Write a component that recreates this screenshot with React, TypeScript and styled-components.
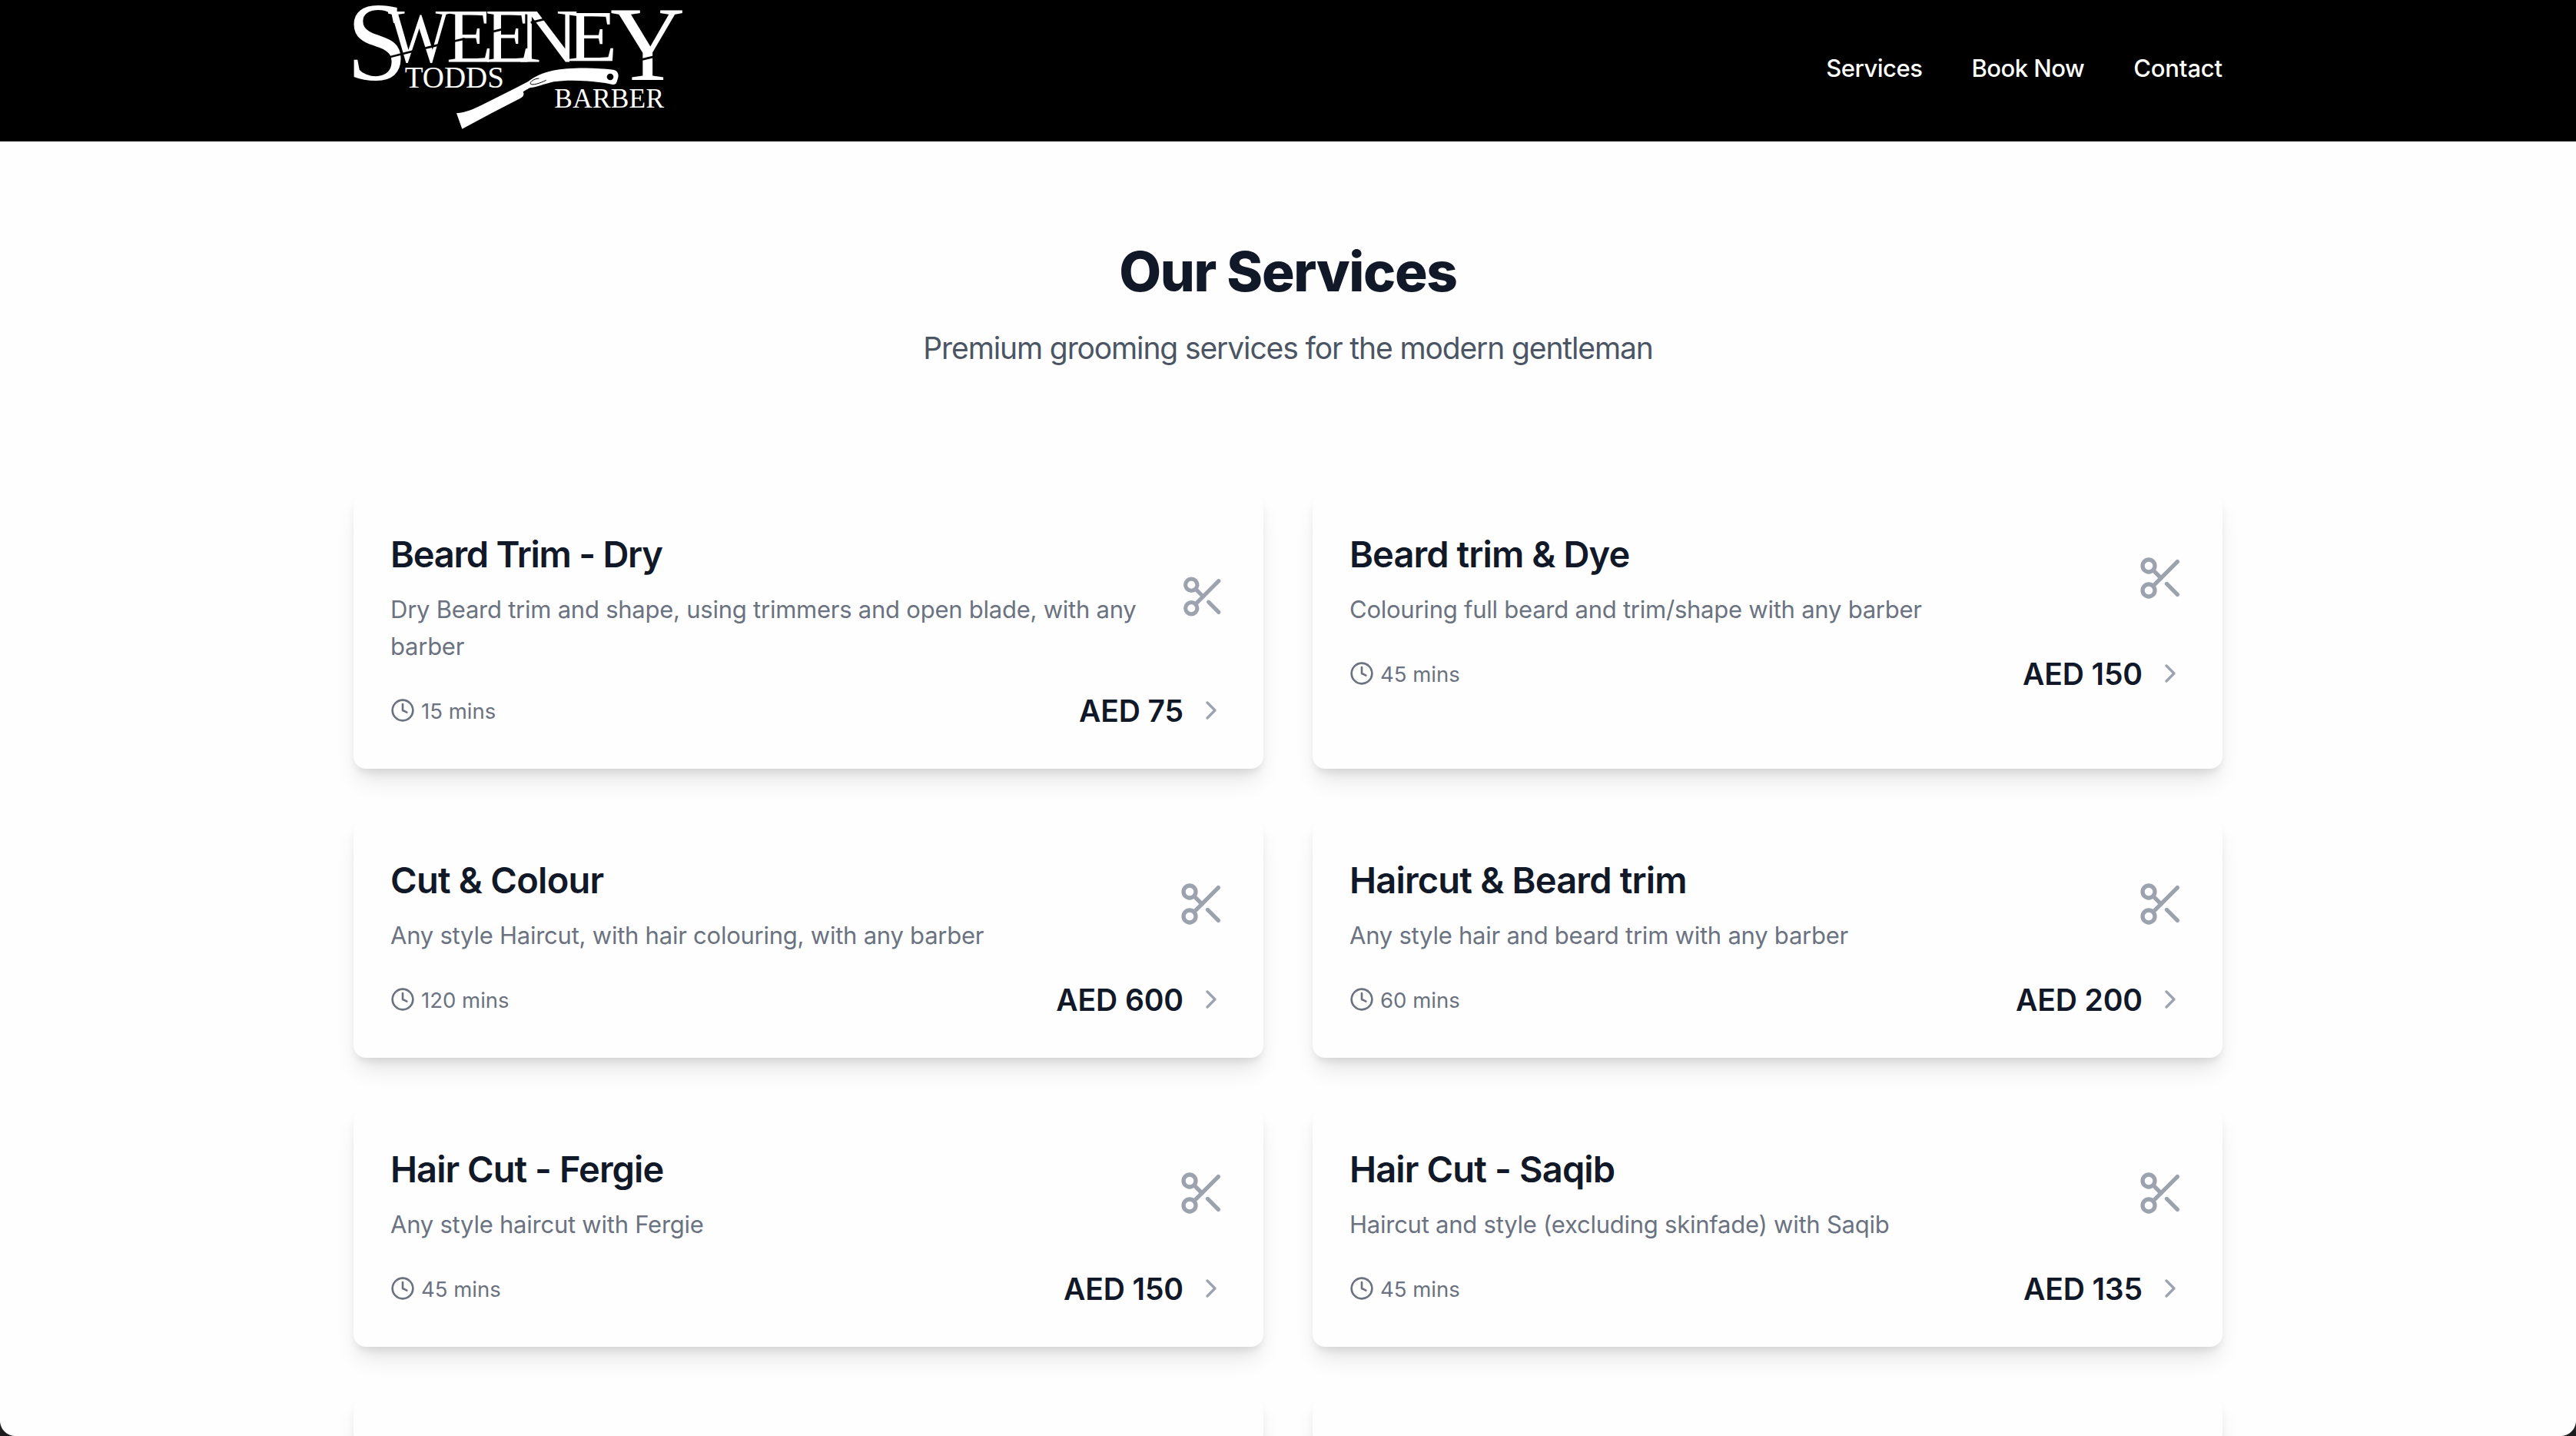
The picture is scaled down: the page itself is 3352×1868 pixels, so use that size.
import React from "react";
import styled, { createGlobalStyle } from "styled-components";
import { ChevronRight, Clock, Scissors } from "lucide-react";

const GlobalStyle = createGlobalStyle`
  *, *::before, *::after { box-sizing: border-box; }
  html, body { margin: 0; padding: 0; background: #fefefe; }
  body { overflow: hidden; font-family: Inter, "Liberation Sans", sans-serif; }
  h1, h2, p { margin: 0; }
`;

const Page = styled.div`
  position: relative;
  height: 1868px;
  overflow: hidden;
  background: #fefefe;
`;

const Header = styled.header`
  height: 184px;
  background: #000;
`;

const Container = styled.div`
  width: 2432px;
  margin: 0 auto;
`;

const HeaderRow = styled(Container)`
  display: flex;
  justify-content: space-between;
  height: 184px;
`;

const LogoLink = styled.a`
  display: block;
  width: 460px;
  height: 184px;
  margin-left: -20px;
`;

const Nav = styled.nav`
  display: flex;
  gap: 64px;
  padding-top: 65px;
`;

const NavLink = styled.a<{ $tracking: number }>`
  color: #fff;
  font-size: 31px;
  line-height: 48px;
  font-weight: 500;
  letter-spacing: ${(p) => p.$tracking}px;
  white-space: nowrap;
`;

const Intro = styled.section`
  display: flex;
  flex-direction: column;
  align-items: center;
  gap: 32px;
  padding-top: 129px;
  margin-bottom: 159px;
`;

const Heading = styled.h1`
  color: #111827;
  font-size: 71px;
  line-height: 80px;
  font-weight: 800;
  letter-spacing: -1.3px;
`;

const Subtitle = styled.p`
  color: #4b5563;
  font-size: 39px;
  line-height: 56px;
  letter-spacing: -1.12px;
`;

const Grid = styled.div`
  display: grid;
  grid-template-columns: 1fr 1fr;
  gap: 64px;
`;

const Card = styled.article`
  min-height: 312px;
  padding: 49px 48px 47px;
  border-radius: 16px;
  background: #fefefe;
  box-shadow: 0 20px 30px -6px rgba(0, 0, 0, 0.1), 0 8px 12px -4px rgba(0, 0, 0, 0.1);
`;

const CardTop = styled.div`
  display: flex;
  align-items: center;
  justify-content: space-between;
`;

const CardText = styled.div`
  display: flex;
  flex-direction: column;
  gap: 16px;
`;

const CardTitle = styled.h2<{ $tracking: number }>`
  color: #111827;
  font-size: 47px;
  line-height: 64px;
  font-weight: 600;
  letter-spacing: ${(p) => p.$tracking}px;
  white-space: nowrap;
`;

const Description = styled.p`
  max-width: 1000px;
  color: #6b7280;
  font-size: 31px;
  line-height: 48px;
  letter-spacing: -0.24px;
`;

const ScissorsIcon = styled(Scissors)<{ $width: number }>`
  flex: none;
  width: ${(p) => p.$width}px;
  height: 64px;
  margin-top: -2px;
  color: #9ca3af;
`;

const CardFooter = styled.div`
  display: flex;
  align-items: center;
  justify-content: space-between;
  height: 56px;
  margin-top: 32px;

  svg {
    margin-top: -2px;
  }
`;

const Duration = styled.div`
  display: flex;
  align-items: center;
  gap: 8px;
  color: #6b7280;
  font-size: 27.5px;
  line-height: 40px;
`;

const PriceGroup = styled.div`
  display: flex;
  align-items: center;
  gap: 16px;
  color: #9ca3af;
`;

const Price = styled.span`
  color: #111827;
  font-size: 39px;
  line-height: 56px;
  font-weight: 600;
  letter-spacing: -0.1px;
`;

const WindowCorner = styled.span<{ $side: "left" | "right" }>`
  position: absolute;
  bottom: 0;
  ${(p) => p.$side}: 0;
  width: 20px;
  height: 20px;
  background: radial-gradient(
    circle at ${(p) => (p.$side === "left" ? "100%" : "0")} 0,
    transparent 19.5px,
    #1c1c1e 20.5px
  );
`;

type Service = {
  title: string;
  text: string;
  mins: number;
  price: number;
  tracking: number;
  iconWidth?: number;
};

const services: Service[] = [
  {
    title: "Beard Trim - Dry",
    text: "Dry Beard trim and shape, using trimmers and open blade, with any barber",
    mins: 15,
    price: 75,
    tracking: -1.25,
    iconWidth: 61,
  },
  {
    title: "Beard trim & Dye",
    text: "Colouring full beard and trim/shape with any barber",
    mins: 45,
    price: 150,
    tracking: -0.9,
  },
  {
    title: "Cut & Colour",
    text: "Any style Haircut, with hair colouring, with any barber",
    mins: 120,
    price: 600,
    tracking: -0.75,
  },
  {
    title: "Haircut & Beard trim",
    text: "Any style hair and beard trim with any barber",
    mins: 60,
    price: 200,
    tracking: -0.8,
  },
  { title: "Hair Cut - Fergie", text: "Any style haircut with Fergie", mins: 45, price: 150, tracking: -0.95 },
  {
    title: "Hair Cut - Saqib",
    text: "Haircut and style (excluding skinfade) with Saqib",
    mins: 45,
    price: 135,
    tracking: -0.85,
  },
];

const glyphs = [
  { ch: "S", x: 33, y: 313, size: 438, sx: 0.977 },
  { ch: "W", x: 195, y: 239, size: 301, sx: 0.85 },
  { ch: "E", x: 423, y: 240, size: 300, sx: 1 },
  { ch: "E", x: 574, y: 240, size: 300, sx: 1 },
  { ch: "N", x: 702, y: 240, size: 300, sx: 1.09 },
  { ch: "E", x: 894, y: 240, size: 286, sx: 1.12 },
  { ch: "Y", x: 1062, y: 312, size: 412, sx: 0.98 },
];

function Logo() {
  return (
    <svg
      viewBox="0 0 1380 552"
      width="460"
      height="184"
      fill="#fff"
      fontFamily='"Liberation Serif", "Times New Roman", serif'
    >
      {glyphs.map((g, i) => (
        <text key={i} transform={`translate(${g.x} ${g.y}) scale(${g.sx} 1)`} fontSize={g.size}>
          {g.ch}
        </text>
      ))}
      <path
        d="M188 226L304 197M340 188L402 173M448 162L494 151M598 125L646 113M752 88L812 73M1184 233L1234 221"
        stroke="#000"
        strokeWidth="8"
      />
      <text x="260" y="342" fontSize="117">
        TODDS
      </text>
      <text x="844" y="419" fontSize="106" letterSpacing="0.8">
        BARBER
      </text>
      <path d="M462 442C500 438 530 425 560 410L690 345L742 318C765 298 800 284 838 275C900 263 990 262 1074 272C1090 275 1096 287 1093 302L1087 322C1084 329 1078 331 1068 329C990 314 900 310 842 319C800 328 780 340 748 343L722 358C727 368 724 377 712 383L600 441L484 503Z" />
      <circle cx="1062" cy="300" r="13" fill="#000" />
      <path d="M784 306C765 307 750 318 750 326C756 336 790 324 812 313" fill="none" stroke="#000" strokeWidth="3" />
    </svg>
  );
}

function ServiceCard({ service }: { service: Service }) {
  return (
    <Card>
      <CardTop>
        <CardText>
          <CardTitle $tracking={service.tracking}>{service.title}</CardTitle>
          <Description>{service.text}</Description>
        </CardText>
        <ScissorsIcon $width={service.iconWidth ?? 64} />
      </CardTop>
      <CardFooter>
        <Duration>
          <Clock size={32} />
          <span>{service.mins} mins</span>
        </Duration>
        <PriceGroup>
          <Price>AED {service.price}</Price>
          <ChevronRight size={40} />
        </PriceGroup>
      </CardFooter>
    </Card>
  );
}

export default function App() {
  return (
    <Page>
      <GlobalStyle />
      <Header>
        <HeaderRow>
          <LogoLink>
            <Logo />
          </LogoLink>
          <Nav>
            <NavLink $tracking={-0.5}>Services</NavLink>
            <NavLink $tracking={-0.5}>Book Now</NavLink>
            <NavLink $tracking={-0.15}>Contact</NavLink>
          </Nav>
        </HeaderRow>
      </Header>
      <Container>
        <Intro>
          <Heading>Our Services</Heading>
          <Subtitle>Premium grooming services for the modern gentleman</Subtitle>
        </Intro>
        <Grid>
          {services.map((s) => (
            <ServiceCard key={s.title} service={s} />
          ))}
          <Card />
          <Card />
        </Grid>
      </Container>
      <WindowCorner $side="left" />
      <WindowCorner $side="right" />
    </Page>
  );
}
